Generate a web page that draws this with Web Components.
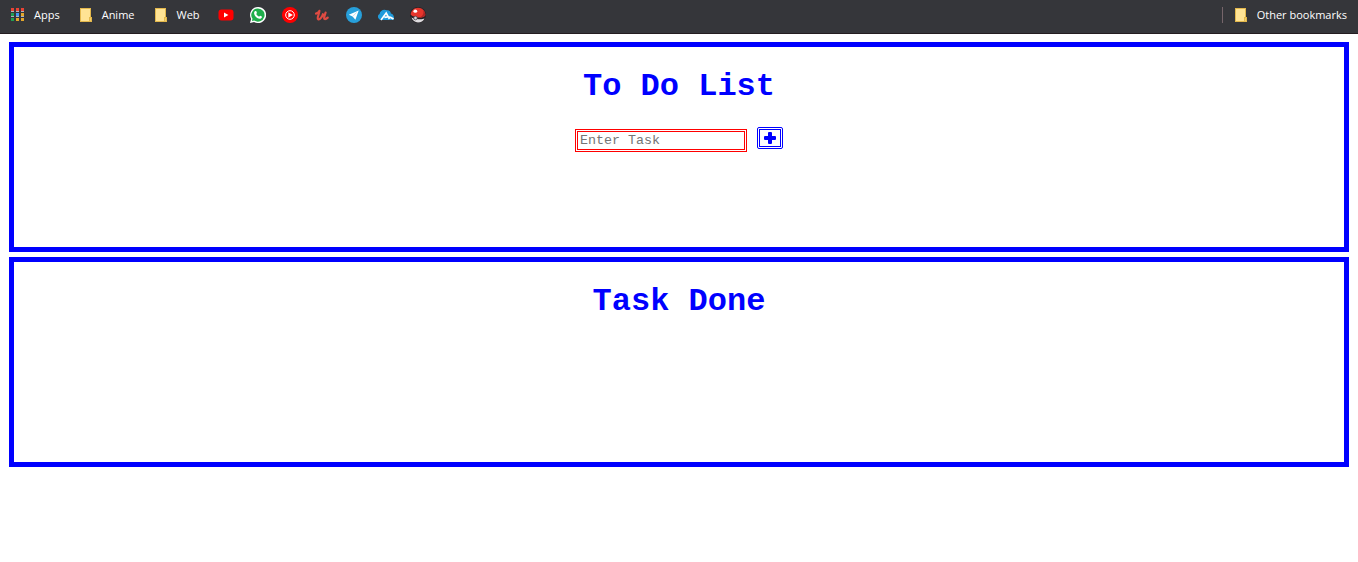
<!DOCTYPE html>
<html lang="en">
<head>
<meta charset="utf-8">
<title>To Do List</title>
<style>
  body { margin: 0; background: #fff; font-family: "Liberation Mono", monospace; }
</style>
</head>
<body>
<todo-app></todo-app>

<template id="icons">
  <svg data-icon="apps" viewBox="0 0 16 16" shape-rendering="crispEdges">
    <path fill="#ea4335" d="M1 1h3v3H1zM6 1h3v3H6zM11 1h3v3h-3z"/>
    <path fill="#1e9e52" d="M1 6h3v3H1zM1 11h3v3H1z"/>
    <path fill="#4297f0" d="M6 6h3v3H6z"/>
    <path fill="#e3a62b" d="M11 6h3v3h-3zM6 11h3v3H6zM11 11h3v3h-3z"/>
    <path fill="#aeb4bd" d="M1 4h3v1H1zM6 4h3v1H6zM11 4h3v1h-3zM1 9h3v1H1zM6 9h3v1H6zM11 9h3v1h-3z"/>
  </svg>
  <svg data-icon="folder" viewBox="0 0 16 16">
    <path fill="#e3b84c" d="M2 1h11v9h1v5H2z"/>
    <path fill="#ffe394" d="M3 2h9v8h-1v4H3z"/>
    <path fill="#f3cc65" d="M12 11h1v3h-1z"/>
  </svg>
  <svg data-icon="youtube" viewBox="0 0 16 16">
    <rect x="0.5" y="2.5" width="15" height="11" rx="3" fill="#f00"/>
    <path fill="#fff" d="M6 5.600v4.800L10.400 8z"/>
  </svg>
  <svg data-icon="whatsapp" viewBox="0 0 16 16">
    <path fill="#fff" d="M8 0a8 8 0 0 0-6.900 12L0 16l4.100-1.100A8 8 0 1 0 8 0z"/>
    <path fill="#1fae4b" d="M8 1.400A6.600 6.600 0 0 0 2.500 11.800L1.900 14.100l2.400-.6A6.600 6.600 0 1 0 8 1.400z"/>
    <path fill="#fff" d="M5.300 4c.4-.2.800-.1 1 .3l.6 1.400c.1.300-.6 1-.6 1.200.6 1.300 1.500 2.100 2.800 2.700.3 0 .8-1 1.100-.9l1.600.8c.3.200.2.600 0 1-.8 1.700-2.700 1.600-4.600.5C5.600 10 4.300 8.200 4.100 6.300 4 5.300 4.600 4.400 5.300 4z"/>
  </svg>
  <svg data-icon="music" viewBox="0 0 16 16">
    <circle cx="8" cy="8" r="8" fill="#f00"/>
    <circle cx="8" cy="8" r="4.300" fill="none" stroke="#fff" stroke-width="1"/>
    <path fill="#fff" d="M6.300 5.300v5.400L10.800 8z"/>
  </svg>
  <svg data-icon="udemy" viewBox="0 0 16 16">
    <path fill="none" stroke="#df4b42" stroke-width="2.200" stroke-linecap="round" stroke-linejoin="round" d="M2 6.600C3.400 6.200 5 4.800 5.400 3.800 5.400 6.500 2.600 11.200 4.100 12.200 6 13 8.200 9.500 8.900 7.200M11.600 5.500C11 7.800 9.200 11.500 10.700 12 11.700 12.200 12.900 11.400 13.700 10.600"/>
  </svg>
  <svg data-icon="telegram" viewBox="0 0 16 16">
    <circle cx="8" cy="8" r="8" fill="#279fda"/>
    <path fill="#fff" d="M12.700 3.400 2.800 7.800l3.800 1.700 2.800 3.300z"/>
    <path stroke="#a9d2ea" stroke-width="0.700" d="m6.800 9.400 3.700-3.900"/>
  </svg>
  <svg data-icon="cloud" viewBox="0 0 16 16">
    <path fill="#209bdb" d="M3.200 13A3.200 3.200 0 0 1 1.600 7C1.800 3.500 6 1.500 8.800 3.300c2.800-.3 3.800 1.300 4.100 3.100C16 7.200 16.600 10.800 15.500 13z"/>
    <path fill="none" stroke="#fff" stroke-width="1.600" d="M3 13 8.200 6l3.200 6M6.400 10.600c3.300-1.500 6-.8 9.100 1.400"/>
  </svg>
  <svg data-icon="pokeball" viewBox="0 0 16 16">
    <circle cx="8" cy="8" r="8" fill="#252225"/>
    <path fill="#e6352b" d="M.6 7.500C1 3.500 4 .7 8 .7c4.300 0 7.500 3.300 7.300 7.500-.6 1.800-4 2.600-7.300 2.300C5 10.200 2.300 9.200.6 7.500z"/>
    <path fill="#aa2526" d="M13.200 3.200c1.600 1.600 2.300 3.300 2.100 5-1.200 1.700-4 2.400-6.300 2.300 3.700-1 5.200-4 4.200-7.300z"/>
    <path fill="#dedcdf" d="M1.400 10.600c3.500 1.900 9 2.200 13.100.8C13.400 14 11 15.400 8 15.400c-3 0-5.600-1.800-6.600-4.800z"/>
    <circle cx="5.500" cy="11" r="1.800" fill="#d8d8dc" stroke="#4b4148" stroke-width="0.800"/>
    <ellipse cx="5.300" cy="4.200" rx="1.900" ry="1.600" fill="#fff"/>
  </svg>
  <svg data-icon="plus" viewBox="0 0 14 14">
    <path fill="#00f" d="M6 1h2a1 1 0 0 1 1 1v3h3a1 1 0 0 1 1 1v2a1 1 0 0 1-1 1H9v3a1 1 0 0 1-1 1H6a1 1 0 0 1-1-1V9H2a1 1 0 0 1-1-1V6a1 1 0 0 1 1-1h3V2a1 1 0 0 1 1-1z"/>
  </svg>
</template>

<template id="todo-app">
  <style>
    :host { display: block; }
    main { display: grid; gap: 5px; padding: 8px 9px; }
  </style>
  <bookmark-bar></bookmark-bar>
  <main>
    <task-panel>
      <span slot="title">To Do List</span>
      <task-form></task-form>
    </task-panel>
    <task-panel><span slot="title">Task Done</span></task-panel>
  </main>
</template>

<template id="bookmark-bar">
  <style>
    :host { display: block; background: #35363a; border-bottom: 1px solid #241c20;
            font: 11px/16px "Open Sans", "Noto Sans", sans-serif; color: #fff; }
    nav { display: flex; align-items: center; gap: 16px; height: 30px; padding: 0 9px 3px 10px; }
    .other { margin-left: auto; padding-left: 10px; border-left: 1px solid #76656a; }
  </style>
  <nav aria-label="Bookmarks">
    <bookmark-link icon="apps">Apps</bookmark-link>
    <bookmark-link icon="folder">Anime</bookmark-link>
    <bookmark-link icon="folder">Web</bookmark-link>
    <bookmark-link icon="youtube" label="YouTube"></bookmark-link>
    <bookmark-link icon="whatsapp" label="WhatsApp"></bookmark-link>
    <bookmark-link icon="music" label="YouTube Music"></bookmark-link>
    <bookmark-link icon="udemy" label="Udemy"></bookmark-link>
    <bookmark-link icon="telegram" label="Telegram"></bookmark-link>
    <bookmark-link icon="cloud" label="Cloud"></bookmark-link>
    <bookmark-link icon="pokeball" label="Pokemon"></bookmark-link>
    <bookmark-link class="other" icon="folder">Other bookmarks</bookmark-link>
  </nav>
</template>

<template id="bookmark-link">
  <style>
    :host { display: block; }
    a { display: flex; align-items: center; gap: 8px; padding-right: 2px; color: inherit; text-decoration: none; white-space: nowrap; }
    :host([label]) a { gap: 0; padding: 0; }
  </style>
  <a href="#"><ui-icon></ui-icon><slot></slot></a>
</template>

<template id="ui-icon">
  <style>
    :host { display: block; width: 16px; height: 16px; flex: none; }
    svg { display: block; width: 100%; height: 100%; }
  </style>
</template>

<template id="task-panel">
  <style>
    :host { display: block; box-sizing: border-box; min-height: 210px; border: 5px solid #00f; text-align: center; }
    h1 { margin: 22px 0 20px; font-size: 32px; line-height: 36px; color: #00f; }
  </style>
  <h1><slot name="title"></slot></h1>
  <slot></slot>
</template>

<template id="task-form">
  <style>
    :host { display: block; }
    form { display: flex; justify-content: center; align-items: flex-start; gap: 10px; }
    input { box-sizing: border-box; width: 172px; height: 23px; margin: 4px 0 0; padding: 1px 2px;
            border: 3px double #f00; font-family: inherit; background: #fff; }
    input::placeholder { color: #757575; }
    button { display: grid; place-items: center; box-sizing: border-box; width: 26px; height: 22px;
             margin: 2px 0 0; padding: 0; border: 3px double #00f; border-radius: 2px; background: #fff; }
    ui-icon { width: 14px; height: 14px; }
  </style>
  <form>
    <input type="text" placeholder="Enter Task" aria-label="Enter Task">
    <button type="button" aria-label="Add task"><ui-icon name="plus"></ui-icon></button>
  </form>
</template>

<script>
  class TemplateElement extends HTMLElement {
    constructor() {
      super();
      const template = document.getElementById(this.localName);
      this.attachShadow({ mode: "open" }).append(template.content.cloneNode(true));
    }
  }

  class UiIcon extends TemplateElement {
    static observedAttributes = ["name"];
    attributeChangedCallback(attribute, previous, name) {
      const source = document.getElementById("icons").content.querySelector(`[data-icon="${name}"]`);
      this.shadowRoot.querySelector("svg")?.remove();
      if (source) this.shadowRoot.append(source.cloneNode(true));
    }
  }

  class BookmarkLink extends TemplateElement {
    connectedCallback() {
      this.shadowRoot.querySelector("ui-icon").setAttribute("name", this.getAttribute("icon"));
      const label = this.getAttribute("label");
      if (label) this.shadowRoot.querySelector("a").setAttribute("aria-label", label);
    }
  }

  customElements.define("ui-icon", UiIcon);
  customElements.define("bookmark-link", BookmarkLink);
  customElements.define("bookmark-bar", class extends TemplateElement {});
  customElements.define("task-form", class extends TemplateElement {});
  customElements.define("task-panel", class extends TemplateElement {});
  customElements.define("todo-app", class extends TemplateElement {});
</script>
</body>
</html>
